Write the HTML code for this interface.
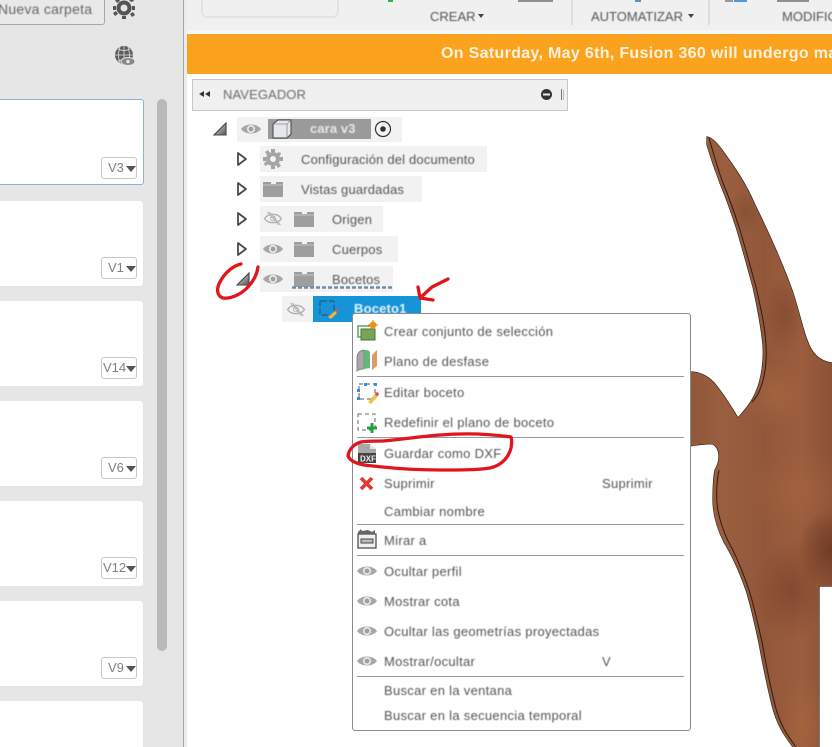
<!DOCTYPE html>
<html><head><meta charset="utf-8"><style>
html,body{margin:0;padding:0;background:#fff}
#p{position:relative;width:832px;height:747px;overflow:hidden;background:#fff;font-family:"Liberation Sans",sans-serif;color:#555}
.b{position:absolute}
.t{position:absolute;white-space:nowrap;font-size:13px;letter-spacing:.18px;line-height:16px;filter:blur(.4px)}
.mt{letter-spacing:.3px}
.card{position:absolute;left:-10px;width:153px;height:85px;background:#fff;border-radius:3px}
.v{position:absolute;left:101px;width:34px;height:20px;background:#fff;border:1px solid #c8c8c8;border-radius:3px;font-size:13px;line-height:20px;color:#808080;text-indent:6px;filter:blur(.3px)}
.v:after{content:"";position:absolute;left:24px;top:8px;border:5px solid transparent;border-top:6px solid #555;border-bottom:0}
.r{position:absolute;background:#f2f2f2}
.s{position:absolute;left:357px;width:327px;height:1px;background:#9a9a9a}
</style></head><body><div id="p">
<div class="b" style="left:0;top:0;width:183px;height:747px;background:#e6e6e6"></div>
<div class="b" style="left:183px;top:0;width:1px;height:747px;background:#a6a6a6"></div>
<div class="b" style="left:184px;top:0;width:3px;height:747px;background:#ececec"></div>
<div class="b" style="left:-10px;top:-5px;width:113px;height:28px;border:1px solid #a8a8a8;border-radius:3px;background:#e9e9e9"></div>
<div class="t" style="left:-2px;top:1px;font-size:14px;letter-spacing:.25px;color:#666">Nueva carpeta</div>
<div class="card" style="top:99px;width:152px;height:84px;border:1px solid #8cb0dc"></div>
<div class="card" style="top:201px"></div><div class="card" style="top:301px"></div><div class="card" style="top:401px"></div><div class="card" style="top:501px"></div><div class="card" style="top:601px"></div><div class="card" style="top:701px;height:60px"></div>
<div class="v" style="top:157px">V3</div><div class="v" style="top:257px">V1</div><div class="v" style="top:357px;text-indent:1px">V14</div><div class="v" style="top:457px">V6</div><div class="v" style="top:557px;text-indent:1px">V12</div><div class="v" style="top:657px">V9</div>
<div class="b" style="left:157px;top:99px;width:10px;height:552px;background:#b9b9b9;border-radius:5px"></div>

<div class="b" style="left:187px;top:0;width:645px;height:30px;background:#f0f0f0"></div>
<div class="b" style="left:187px;top:30px;width:645px;height:4px;background:#f7f7f7"></div>
<div class="b" style="left:201px;top:-6px;width:134px;height:20px;border:2px solid #e2e2e2;border-radius:6px"></div>
<div class="b" style="left:571px;top:0;width:2px;height:25px;background:#dcdcdc"></div>
<div class="b" style="left:708px;top:0;width:2px;height:25px;background:#dcdcdc"></div>
<div class="b" style="left:388px;top:0;width:5px;height:2px;background:#2cb34a"></div>
<div class="b" style="left:518px;top:0;width:35px;height:2px;background:#8f8f8f"></div>
<div class="b" style="left:635px;top:0;width:6px;height:2px;background:#5a8fc0"></div>
<div class="b" style="left:725px;top:0;width:8px;height:2px;background:#999"></div>
<div class="b" style="left:734px;top:0;width:13px;height:2px;background:#4c9be0"></div>
<div class="b" style="left:777px;top:0;width:32px;height:2px;background:#8f8f8f"></div>
<div class="t" style="left:430px;top:9px;letter-spacing:0;color:#555">CREAR</div>
<div class="t" style="left:591px;top:9px;letter-spacing:0;color:#555">AUTOMATIZAR</div>
<div class="t" style="left:782px;top:9px;letter-spacing:0;color:#555">MODIFICAR</div>
<div class="b" style="left:478px;top:14px;border:3.500px solid transparent;border-top:4.500px solid #444;border-bottom:0"></div>
<div class="b" style="left:688px;top:14px;border:3.500px solid transparent;border-top:4.500px solid #444;border-bottom:0"></div>

<div class="b" style="left:187px;top:34px;width:645px;height:40px;background:#fba31e"></div>
<div class="t" style="left:441px;top:45px;font-size:16px;font-weight:bold;letter-spacing:.32px;line-height:18px;color:#fff3df;filter:blur(.2px)">On Saturday, May 6th, Fusion 360 will undergo maintenance</div>

<div class="b" style="left:192px;top:79px;width:374px;height:30px;background:#f0f0f0;border:1px solid #c6c6c6"></div>
<div class="t" style="left:223px;top:87px;letter-spacing:.1px;color:#6a6a6a">NAVEGADOR</div>

<div class="r" style="left:237px;top:117px;width:165px;height:25px"></div>
<div class="b" style="left:268px;top:119px;width:103px;height:20px;background:#9a9a9a"></div>
<div class="r" style="left:260px;top:146px;width:227px;height:26px"></div>
<div class="r" style="left:260px;top:176px;width:162px;height:26px"></div>
<div class="r" style="left:260px;top:206px;width:123px;height:26px"></div>
<div class="r" style="left:260px;top:236px;width:138px;height:26px"></div>
<div class="r" style="left:260px;top:266px;width:133px;height:26px"></div>
<div class="r" style="left:282px;top:296px;width:31px;height:26px"></div>
<div class="b" style="left:313px;top:296px;width:108px;height:26px;background:#1595d8"></div>

<div class="t" style="left:310px;top:121px;font-weight:bold;letter-spacing:.1px;color:#e8e8e8">cara v3</div>
<div class="t" style="left:301px;top:152px">Configuración del documento</div>
<div class="t" style="left:301px;top:182px">Vistas guardadas</div>
<div class="t" style="left:332px;top:212px">Origen</div>
<div class="t" style="left:332px;top:242px">Cuerpos</div>
<div class="t" style="left:332px;top:272px">Bocetos</div>
<div class="t" style="left:354px;top:301px;font-weight:bold;color:#e6f3fb">Boceto1</div>

<svg class="b" style="left:0;top:0" width="832" height="747" viewBox="0 0 832 747">
<defs>
<linearGradient id="tex" x1="0" y1="0" x2="1" y2="0">
<stop offset="0" stop-color="#8f5537"/><stop offset=".3" stop-color="#9a5f3e"/><stop offset=".55" stop-color="#92573a"/><stop offset=".8" stop-color="#9b5d3d"/><stop offset="1" stop-color="#8b5236"/>
</linearGradient>
<radialGradient id="dk1"><stop offset="0" stop-color="#6e3a26" stop-opacity=".95"/><stop offset="1" stop-color="#6e3a26" stop-opacity="0"/></radialGradient>
<radialGradient id="lt1"><stop offset="0" stop-color="#a5653f" stop-opacity=".8"/><stop offset="1" stop-color="#a5653f" stop-opacity="0"/></radialGradient>
<linearGradient id="tri" x1="0" y1="0" x2="1" y2="1"><stop offset="0" stop-color="#e6e6e6"/><stop offset="1" stop-color="#555"/></linearGradient>
<clipPath id="m"><path d="M707 137C711 137 716 142 722 150 735 168 745 182 755 205 770 235 785 270 793 293 800 315 803 330 807 340 811 352 818 361 832 363V586H819V747H793C784 735 777 725 772 705 767 685 763 665 759 643 754 620 751 605 746 590 739 570 732 555 724 542 717 528 713 515 713 500 713 485 714 475 715 470 721 460 720 448 713 444 706 443 698 445 690 446V372C700 372 708 376 715 384 724 395 732 408 738 418 745 410 752 402 756 392 762 378 764 360 763 345 761 325 757 305 753 287 747 265 742 247 737 230 730 208 725 195 720 183 715 170 710 155 707 145Z"/></clipPath>
<symbol id="eye" viewBox="0 0 20 14"><path d="M0 7C4 1 16 1 20 7 16 13 4 13 0 7Z" fill="#a6a6a6"/><circle cx="10" cy="7" r="4" fill="#ececec"/><circle cx="10" cy="7" r="2.400" fill="#a0a0a0"/></symbol>
<symbol id="neye" viewBox="0 0 20 16"><path d="M1 8C5 2 15 2 19 8 15 14 5 14 1 8Z" fill="none" stroke="#b0b0b0" stroke-width="1.400"/><circle cx="10" cy="8" r="2.600" fill="none" stroke="#b0b0b0"/><path d="M4 1 16 15M6 1 18 15" stroke="#b0b0b0" stroke-width="1"/></symbol>
<symbol id="fold" viewBox="0 0 20 16"><path d="M0 1H8V3H13V1H20V16H0Z" fill="#9e9e9e"/><path d="M0 4H20" stroke="#c4c4c4"/></symbol>
<symbol id="arr" viewBox="0 0 12 16"><path d="M2 2 10 8 2 14Z" fill="#fafafa" stroke="#4a4a4a" stroke-width="1.800" stroke-linejoin="round"/></symbol>
<symbol id="op" viewBox="0 0 14 14"><path d="M1 13 13 1V13Z" fill="url(#tri)" stroke="#444" stroke-width="1.100"/></symbol>
</defs>

<!-- model -->
<path d="M707 137C711 137 716 142 722 150 735 168 745 182 755 205 770 235 785 270 793 293 800 315 803 330 807 340 811 352 818 361 832 363V586H819V747H793C784 735 777 725 772 705 767 685 763 665 759 643 754 620 751 605 746 590 739 570 732 555 724 542 717 528 713 515 713 500 713 485 714 475 715 470 721 460 720 448 713 444 706 443 698 445 690 446V372C700 372 708 376 715 384 724 395 732 408 738 418 745 410 752 402 756 392 762 378 764 360 763 345 761 325 757 305 753 287 747 265 742 247 737 230 730 208 725 195 720 183 715 170 710 155 707 145Z" fill="#2c1a12" stroke="#2c1a12" stroke-width="1.200"/>
<g clip-path="url(#m)">
<rect x="680" y="130" width="152" height="620" fill="url(#tex)"/>
<ellipse cx="745" cy="212" rx="18" ry="24" fill="url(#dk1)" opacity=".3"/>
<ellipse cx="785" cy="315" rx="20" ry="40" fill="url(#dk1)" opacity=".4"/>
<ellipse cx="775" cy="395" rx="34" ry="35" fill="url(#lt1)"/>
<ellipse cx="800" cy="490" rx="60" ry="40" fill="url(#lt1)" opacity=".7"/>
<ellipse cx="832" cy="550" rx="36" ry="40" fill="url(#dk1)"/>
<ellipse cx="792" cy="590" rx="36" ry="50" fill="url(#dk1)" opacity=".55"/>
<ellipse cx="803" cy="725" rx="22" ry="50" fill="url(#lt1)"/>
<path d="M709 138C714 155 718 170 723 183 728 195 733 208 740 230 745 247 750 265 756 287 760 305 765 325 766 345 767 362 765 378 759 392 756 398 754 400 752 402" fill="none" stroke="#2e1b13" stroke-width="1"/>
<path d="M719 470C717 480 716 490 717 503 718 515 722 528 728 541 735 553 742 570 749 590 754 605 758 625 762 642 766 665 770 685 775 705 780 725 787 735 796 747" fill="none" stroke="#2e1b13" stroke-width="1"/>
</g>

<!-- nav header icons -->
<path d="M204 91 199 94 204 97ZM210 91 205 94 210 97Z" fill="#333"/>
<circle cx="546.500" cy="94.500" r="5.500" fill="#333"/><rect x="543" y="93.500" width="7" height="2" fill="#eee"/>
<rect x="561" y="89" width="1" height="11" fill="#777"/><rect x="563" y="90" width="1" height="10" fill="#bbb"/>

<!-- left panel icons -->
<g fill="#555"><circle cx="124" cy="8" r="7.500"/><path d="M122 -3h4v3h-4zM122 16h4v3h-4zM113 6h3v4h-3zM132 6h3v4h-3zM115 0l3-2 2 3-3 2zM130 14l3-2 2 3-3 2zM115 16l-2-3 3-2 2 3zM131 2l-2-2 3-2 2 3z"/></g><circle cx="124" cy="8" r="3.500" fill="#e6e6e6"/>
<circle cx="124" cy="55" r="9" fill="#5d5d5d"/>
<path d="M115 55H133M124 46V64M118 49Q124 52 130 49M118 61Q124 58 130 61M120 47Q117 55 120 63M128 47Q131 55 128 63" stroke="#e0e0e0" stroke-width=".8" fill="none"/>
<ellipse cx="128" cy="61.500" rx="7" ry="4" fill="#888" stroke="#e6e6e6"/><circle cx="128" cy="61.500" r="1.800" fill="#e6e6e6"/>

<!-- tree icons -->
<use href="#op" x="213" y="122" width="14" height="14"/>
<use href="#eye" x="241" y="122" width="20" height="14"/>
<path d="M273 124 278 120H291V134L287 138H273Z" fill="#e4e8ee" stroke="#444" stroke-width="1"/><path d="M273 124H287V138M287 124 291 120" fill="none" stroke="#888" stroke-width=".8"/>
<circle cx="383" cy="129" r="7.500" fill="#f4f4f4" stroke="#333" stroke-width="1.200"/><circle cx="383" cy="129" r="2.800" fill="#333"/>

<use href="#arr" x="236" y="151" width="12" height="16"/>
<use href="#arr" x="236" y="181" width="12" height="16"/>
<use href="#arr" x="236" y="211" width="12" height="16"/>
<use href="#arr" x="236" y="241" width="12" height="16"/>
<use href="#op" x="236" y="272" width="14" height="14"/>

<g fill="#a4a4a4"><circle cx="273" cy="159" r="7"/><path d="M271 149h4v3h-4zM271 166h4v3h-4zM263 157h3v4h-3zM280 157h3v4h-3zM265 152l3-2 2 3-3 2zM276 165l3-2 2 3-3 2zM265 166l-1-3 3-2 2 3zM278 152l3 1-1 3-3-1z"/></g><circle cx="273" cy="159" r="3" fill="#f2f2f2"/>
<use href="#fold" x="263" y="181" width="20" height="16"/>
<use href="#neye" x="263" y="211" width="20" height="15"/>
<use href="#fold" x="294" y="211" width="20" height="16"/>
<use href="#eye" x="263" y="242" width="20" height="14"/>
<use href="#fold" x="294" y="241" width="20" height="16"/>
<use href="#eye" x="263" y="272" width="20" height="14"/>
<use href="#fold" x="294" y="271" width="20" height="16"/>
<use href="#neye" x="286" y="302" width="20" height="15"/>
<path d="M292 287.500H392" fill="none" stroke="#6f8ba8" stroke-width="2.500" stroke-dasharray="4 2"/>
<rect x="320" y="301" width="14" height="14" rx="1" fill="none" stroke="#33566f" stroke-width="1.200" stroke-dasharray="6 2"/>
<path d="M328 317 335 311 337 313 331 319Z" fill="#f1b53a"/><path d="M335 311 337 309 339 311 337 313Z" fill="#d9536f"/>
</svg>

<!-- menu -->
<div class="b" style="left:352px;top:313px;width:337px;height:416px;background:#fff;border:1px solid #8a8a8a;border-radius:3px"></div>
<div class="s" style="top:376px"></div><div class="s" style="top:437px"></div><div class="s" style="top:524px"></div><div class="s" style="top:555px"></div><div class="s" style="top:676px"></div>
<div class="t mt" style="left:384px;top:324px">Crear conjunto de selección</div>
<div class="t mt" style="left:384px;top:354px">Plano de desfase</div>
<div class="t mt" style="left:384px;top:385px">Editar boceto</div>
<div class="t mt" style="left:384px;top:415px">Redefinir el plano de boceto</div>
<div class="t mt" style="left:384px;top:446px">Guardar como DXF</div>
<div class="t mt" style="left:384px;top:476px">Suprimir</div>
<div class="t mt" style="left:602px;top:476px">Suprimir</div>
<div class="t mt" style="left:384px;top:504px">Cambiar nombre</div>
<div class="t mt" style="left:384px;top:533px">Mirar a</div>
<div class="t mt" style="left:384px;top:564px">Ocultar perfil</div>
<div class="t mt" style="left:384px;top:594px">Mostrar cota</div>
<div class="t mt" style="left:384px;top:624px">Ocultar las geometrías proyectadas</div>
<div class="t mt" style="left:384px;top:654px">Mostrar/ocultar</div>
<div class="t mt" style="left:602px;top:654px">V</div>
<div class="t mt" style="left:384px;top:683px">Buscar en la ventana</div>
<div class="t mt" style="left:384px;top:708px">Buscar en la secuencia temporal</div>

<svg class="b" style="left:0;top:0" width="832" height="747" viewBox="0 0 832 747">
<!-- menu icons -->
<rect x="358" y="326" width="14" height="11" fill="none" stroke="#3e8a3e" stroke-width="1.200"/>
<rect x="361" y="329" width="14" height="11" fill="#7aa35a" stroke="#3e7a34" stroke-width="1"/>
<circle cx="373" cy="325" r="3.500" fill="#f39a1f"/><path d="M373 320V330M368 325H378" stroke="#e98a12" stroke-width="1"/>

<path d="M357 356C358 352 361 350 364 350V369C361 369 358 370 357 371Z" fill="#a8a8a8" stroke="#777" stroke-width=".8"/>
<path d="M364 350C366 350 369 350 370 352V368L364 369Z" fill="#62b878"/>
<path d="M372 355 377 350V366L372 370Z" fill="#dd9a68"/>

<rect x="359" y="384" width="16" height="15" fill="none" stroke="#555" stroke-width="1" stroke-dasharray="4 3"/>
<g fill="#2f8fe0"><rect x="357" y="389" width="3" height="3"/><rect x="364" y="383" width="3" height="3"/><rect x="374" y="383" width="3" height="3"/><rect x="357" y="397" width="3" height="3"/></g>
<path d="M368 402 375 394 378 396 371 404Z" fill="#f1c04a"/><circle cx="377" cy="394" r="1.800" fill="#e0445a"/>

<rect x="358" y="414" width="17" height="16" fill="none" stroke="#666" stroke-width="1" stroke-dasharray="4 3"/>
<path d="M372 423V433M367 428H377" stroke="#1fa33f" stroke-width="3"/>

<path d="M358 444H370L376 449V463H358Z" fill="#a8a8a8"/><path d="M370 444V449H376Z" fill="#e4e4e4"/>
<rect x="358" y="453" width="18" height="10" fill="#444"/>
<text x="360" y="461.500" font-family="Liberation Sans,sans-serif" font-size="8" font-weight="bold" fill="#eee">DXF</text>

<path d="M361 478 372 489M372 478 361 489" stroke="#e03a32" stroke-width="3.600"/>

<rect x="358" y="534" width="18" height="14" fill="#f0f0f0" stroke="#444" stroke-width="1.200"/>
<rect x="361" y="539" width="12" height="4" fill="#bbb" stroke="#444" stroke-width="1"/>
<path d="M358 532 361 529 362 531 368 530 372 532 375 530V534H358Z" fill="#666"/>

<defs><symbol id="eye2" viewBox="0 0 20 14"><path d="M0 7C4 1 16 1 20 7 16 13 4 13 0 7Z" fill="#a8a8a8"/><circle cx="10" cy="7" r="4" fill="#e8e8e8"/><circle cx="10" cy="7" r="2.400" fill="#a0a0a0"/></symbol></defs>
<use href="#eye2" x="357" y="564" width="20" height="14"/>
<use href="#eye2" x="357" y="594" width="20" height="14"/>
<use href="#eye2" x="357" y="624" width="20" height="14"/>
<use href="#eye2" x="357" y="654" width="20" height="14"/>

<!-- red annotations -->
<g fill="none" stroke="#e0161c" stroke-width="3.300" stroke-linecap="round" stroke-linejoin="round">
<path d="M258 267C257 274 254 281 247 288 240 295 230 299 223 298 217 296 216 289 220 282 224 274 232 266 241 264"/>
<path d="M448 279 432 287 420 298M418 287 420 298 433 300"/>
<path d="M511 437C490 434 465 433 440 435 425 436 405 439 383 441 375 441 367 441 361 442 354 444 349 449 348 456 350 461 358 465 373 466 390 468 415 470 440 470 460 470 478 470 490 468 503 465 509 456 511 448 512 443 512 440 511 437Z"/>
</g>
</svg>
</div></body></html>
